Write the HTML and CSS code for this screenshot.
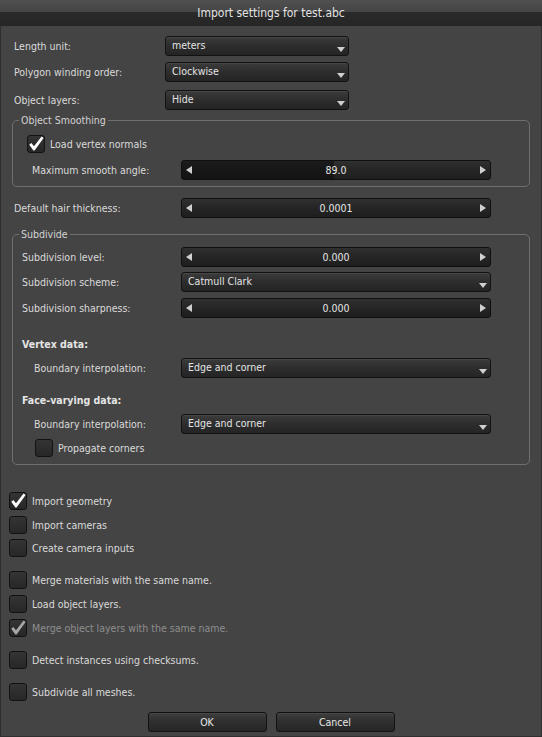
FILE: index.html
```html
<!DOCTYPE html>
<html>
<head>
<meta charset="utf-8">
<title>Import settings for test.abc</title>
<link rel="stylesheet" href="styles.css">
</head>
<body>
<div class="dialog">
  <div class="titlebar">Import settings for test.abc</div>

  <div class="row top r1"><span class="lbl lbl-top">Length unit:</span><div class="combo combo-top"><span class="ctext">meters</span><span class="carrow"></span></div></div>
  <div class="row top r2"><span class="lbl lbl-top">Polygon winding order:</span><div class="combo combo-top"><span class="ctext">Clockwise</span><span class="carrow"></span></div></div>
  <div class="row top r3"><span class="lbl lbl-top">Object layers:</span><div class="combo combo-top"><span class="ctext">Hide</span><span class="carrow"></span></div></div>

  <fieldset class="group g1">
    <legend>Object Smoothing</legend>
    <div class="g1-inner">
      <div class="cbrow g1-cb"><span class="cb"><svg viewBox="0 0 16 16" width="16" height="16"><path class="tick" d="M1.2 8.8 L3.4 7.0 L6.0 10.2 L13.6 0.6 L15.6 2.0 L6.6 14.4 L5.4 14.4 Z"/></svg></span><span class="cblabel">Load vertex normals</span></div>
      <div class="row g1-row"><span class="lbl lbl-g1">Maximum smooth angle:</span><div class="slider" style="--fill:49.4%"><span class="larr"></span><span class="sval">89.0</span><span class="rarr"></span></div></div>
    </div>
  </fieldset>

  <div class="row hair"><span class="lbl lbl-hair">Default hair thickness:</span><div class="slider" style="--fill:0%"><span class="larr"></span><span class="sval">0.0001</span><span class="rarr"></span></div></div>

  <fieldset class="group g2">
    <legend>Subdivide</legend>
    <div class="g2-inner">
      <div class="row s1"><span class="lbl lbl-g2">Subdivision level:</span><div class="slider" style="--fill:0%"><span class="larr"></span><span class="sval">0.000</span><span class="rarr"></span></div></div>
      <div class="row s2"><span class="lbl lbl-g2">Subdivision scheme:</span><div class="combo combo-wide"><span class="ctext">Catmull Clark</span><span class="carrow"></span></div></div>
      <div class="row s3"><span class="lbl lbl-g2">Subdivision sharpness:</span><div class="slider" style="--fill:0%"><span class="larr"></span><span class="sval">0.000</span><span class="rarr"></span></div></div>

      <div class="heading h1">Vertex data:</div>
      <div class="row sub"><span class="lbl lbl-sub">Boundary interpolation:</span><div class="combo combo-wide"><span class="ctext">Edge and corner</span><span class="carrow"></span></div></div>

      <div class="heading h2">Face-varying data:</div>
      <div class="row sub"><span class="lbl lbl-sub">Boundary interpolation:</span><div class="combo combo-wide"><span class="ctext">Edge and corner</span><span class="carrow"></span></div></div>
      <div class="cbrow prop"><span class="cb"></span><span class="cblabel">Propagate corners</span></div>
    </div>
  </fieldset>

  <div class="checklist">
    <div class="cbrow c1"><span class="cb"><svg viewBox="0 0 16 16" width="16" height="16"><path class="tick" d="M1.2 8.8 L3.4 7.0 L6.0 10.2 L13.6 0.6 L15.6 2.0 L6.6 14.4 L5.4 14.4 Z"/></svg></span><span class="cblabel">Import geometry</span></div>
    <div class="cbrow c2"><span class="cb"></span><span class="cblabel">Import cameras</span></div>
    <div class="cbrow c3"><span class="cb"></span><span class="cblabel">Create camera inputs</span></div>
    <div class="cbrow c4"><span class="cb"></span><span class="cblabel">Merge materials with the same name.</span></div>
    <div class="cbrow c5"><span class="cb"></span><span class="cblabel">Load object layers.</span></div>
    <div class="cbrow c6 disabled"><span class="cb"><svg viewBox="0 0 16 16" width="16" height="16"><path class="tick" d="M1.2 8.8 L3.4 7.0 L6.0 10.2 L13.6 0.6 L15.6 2.0 L6.6 14.4 L5.4 14.4 Z"/></svg></span><span class="cblabel">Merge object layers with the same name.</span></div>
    <div class="cbrow c7"><span class="cb"></span><span class="cblabel">Detect instances using checksums.</span></div>
    <div class="cbrow c8"><span class="cb"></span><span class="cblabel">Subdivide all meshes.</span></div>
  </div>

  <div class="buttons">
    <div class="btn">OK</div>
    <div class="btn">Cancel</div>
  </div>
</div>
</body>
</html>
```

FILE: styles.css
```css
* { box-sizing: border-box; }
html, body { margin: 0; padding: 0; }
body {
  width: 542px;
  height: 737px;
  overflow: hidden;
  background: #444444;
  font-family: "DejaVu Sans Condensed", "DejaVu Sans", sans-serif;
  font-stretch: condensed;
  font-size: 10.5px;
  line-height: 13px;
  color: #dadada;
}
.dialog {
  width: 542px;
  height: 737px;
  background: #444444;
  box-shadow: inset 1px 0 #2f2f2f, inset -1px 0 #2f2f2f, inset 0 -1px #2f2f2f;
}
.titlebar {
  height: 26px;
  line-height: 27px;
  text-align: center;
  font-size: 12px;
  color: #e2e2e2;
  background: linear-gradient(#505050 0, #454545 12px, #2a2a2a 12px, #262626 26px);
}

.row { display: flex; align-items: center; height: 20px; }
.lbl { flex: none; white-space: nowrap; }

/* top rows */
.top { padding-left: 14px; }
.r1 { margin-top: 10px; }
.r2 { margin-top: 6px; }
.r3 { margin-top: 8px; }
.lbl-top { width: 151px; }
.combo-top { width: 184px; }

/* combo */
.combo {
  height: 20px;
  display: flex;
  border: 1px solid #121212;
  border-radius: 3px;
  background: linear-gradient(#3c3c3c 0%, #2e2e2e 45%, #242424 100%);
  box-shadow: inset 0 1px rgba(255,255,255,0.06);
  padding-left: 6px;
  color: #e4e4e4;
}
.combo-wide { width: 310px; }
.ctext { flex: 1; line-height: 17px; white-space: nowrap; }
.carrow {
  flex: none;
  align-self: flex-end;
  width: 0; height: 0;
  margin: 0 3px 3px 0;
  border-left: 4.5px solid transparent;
  border-right: 4.5px solid transparent;
  border-top: 5px solid #cfcfcf;
}

/* slider */
.slider {
  width: 310px;
  height: 20px;
  display: flex;
  align-items: center;
  border: 1px solid #0f0f0f;
  border-radius: 3px;
  background:
    linear-gradient(to right, rgba(10,10,10,0.55) 0, rgba(10,10,10,0.55) var(--fill), transparent var(--fill)),
    linear-gradient(#303030 0%, #262626 45%, #1e1e1e 100%);
  color: #e6e6e6;
}
.sval { flex: 1; text-align: center; line-height: 17px; }
.larr, .rarr { flex: none; width: 0; height: 0; border-top: 4.5px solid transparent; border-bottom: 4.5px solid transparent; }
.larr { margin-left: 4px; border-right: 6px solid #cfcfcf; }
.rarr { margin-right: 4px; border-left: 6px solid #cfcfcf; }

/* groups */
.group {
  margin: 0 12px;
  padding: 0;
  min-width: 0;
  border: 1px solid #6f6f6f;
  border-radius: 5px;
}
.group legend {
  margin-left: 6px;
  padding: 0 2px;
  line-height: 13px;
  color: #d2d2d2;
}
.g1 { margin-top: 4px; }
.g1-inner { padding: 0 0 6px 14px; }
.g1-cb { margin-top: 8px; }
.g1-row { margin-top: 7px; padding-left: 5px; }
.lbl-g1 { width: 149px; }

.hair { margin-top: 11px; padding-left: 14px; }
.lbl-hair { width: 167px; }

.g2 { margin-top: 10px; }
.g2-inner { padding: 0 0 7px 9px; }
.lbl-g2 { width: 159px; }
.s1 { margin-top: 6px; }
.s2 { margin-top: 5px; }
.s3 { margin-top: 6px; }
.heading { font-weight: bold; color: #e4e4e4; }
.h1 { margin-top: 20px; }
.h2 { margin-top: 16px; }
.sub { margin-top: 7px; padding-left: 12px; }
.lbl-sub { width: 147px; }
.prop { margin-top: 5px; padding-left: 13px; }

/* checkboxes */
.cbrow { display: flex; align-items: center; height: 18px; }
.cb {
  flex: none;
  width: 18px;
  height: 18px;
  border: 1px solid #121212;
  border-radius: 3px;
  background: linear-gradient(#343434, #272727);
}
.cb svg { display: block; }
.tick { fill: #ffffff; }
.cblabel { margin-left: 5px; white-space: nowrap; }
.disabled .tick { fill: #a6a6a6; }
.disabled .cblabel { color: #8e8e8e; }

.checklist { margin-top: 27px; padding-left: 9px; }
.c2 { margin-top: 6px; }
.c3 { margin-top: 5px; }
.c4 { margin-top: 14px; }
.c5 { margin-top: 6px; }
.c6 { margin-top: 6px; }
.c7 { margin-top: 14px; }
.c8 { margin-top: 14px; }

/* buttons */
.buttons { display: flex; justify-content: center; gap: 9px; margin-top: 11px; }
.btn {
  width: 119px;
  height: 20px;
  line-height: 18px;
  text-align: center;
  border: 1px solid #111111;
  border-radius: 3px;
  background: linear-gradient(#3e3e3e 0%, #303030 45%, #262626 100%);
  box-shadow: inset 0 1px rgba(255,255,255,0.06);
  color: #e8e8e8;
}
```
